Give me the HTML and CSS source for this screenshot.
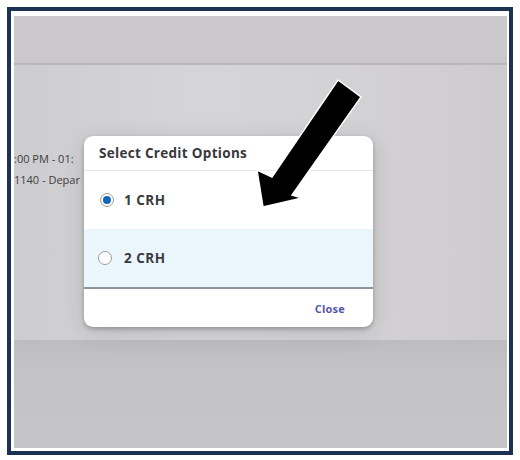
FILE: index.html
```html
<!DOCTYPE html>
<html>
<head>
<meta charset="utf-8">
<link rel="stylesheet" href="styles.css">
</head>
<body>
<div class="frame">
  <div class="screen">
    <div class="topbar"></div>
    <div class="main">
      <div class="line first">:00 PM - 01:</div>
      <div class="line">1140 - Depar</div>
    </div>
    <div class="bottom"></div>

    <div class="modal">
      <div class="modal-head">Select Credit Options</div>
      <div class="option">
        <span class="radio checked"></span>
        <span class="label">1 CRH</span>
      </div>
      <div class="option hover">
        <span class="radio"></span>
        <span class="label">2 CRH</span>
      </div>
      <div class="modal-foot"><span class="close">Close</span></div>
    </div>

    <svg class="arrow" width="520" height="460" viewBox="0 0 520 460">
      <polygon points="338,80 361,97 292,195 302,198 263,207 257,170 272,177" fill="#000" stroke="#fff" stroke-width="1.5" stroke-linejoin="miter"/>
    </svg>
  </div>
</div>
</body>
</html>
```
FILE: styles.css
```css
html, body {
  margin: 0;
  padding: 0;
  background: #ffffff;
}
body {
  width: 520px;
  height: 460px;
  font-family: "Open Sans", "Liberation Sans", sans-serif;
}
.frame {
  margin: 7px 0 0 7px;
  border: 4px solid #1d3152;
  padding: 5px 2px 3px 3px;
  box-sizing: content-box;
  background: #ffffff;
  width: 493px;
  height: 432px;
}
.screen {
  position: relative;
  width: 493px;
  height: 432px;
  background: #cfcdd0;
  overflow: hidden;
  display: flex;
  flex-direction: column;
}
.topbar {
  height: 47px;
  background: #cac8cb;
  border-bottom: 2px solid #b9b7ba;
  flex: none;
}
.main {
  height: 275px;
  flex: none;
  background: linear-gradient(90deg, #cdcccf 0%, #d5d4d6 35%, #d3d2d4 65%, #cdcbce 100%);
  padding-top: 83px;
  box-sizing: border-box;
}
.line {
  font-size: 11px;
  color: #3d3d40;
  line-height: 21px;
  white-space: nowrap;
  margin-left: 0;
}
.bottom {
  flex: 1;
  background: linear-gradient(180deg, #bdbcbf 0%, #c3c2c5 30%, #c5c4c7 100%);
}
.modal {
  position: absolute;
  left: 70px;
  top: 120px;
  width: 289px;
  height: 191px;
  background: #ffffff;
  border-radius: 9px;
  box-shadow: 0 2px 4px rgba(0,0,0,0.25), 0 4px 24px rgba(0,0,0,0.12);
  display: flex;
  flex-direction: column;
  overflow: hidden;
}
.modal-head {
  height: 35px;
  box-sizing: border-box;
  padding: 8px 0 0 15px;
  font-size: 13.5px;
  font-weight: 700;
  color: #38383b;
  border-bottom: 1px solid #e9e9ea;
  letter-spacing: 0.3px;
}
.option {
  height: 58px;
  display: flex;
  align-items: center;
  padding-left: 16px;
  gap: 10px;
}
.option.hover {
  background: #eaf5fc;
  height: 58px;
  border-bottom: 2px solid #8e949c;
  padding-left: 14px;
  gap: 12px;
}
.radio {
  width: 12px;
  height: 12px;
  border-radius: 50%;
  border: 1px solid #9c9ca0;
  background: #ffffff;
  display: flex;
  align-items: center;
  justify-content: center;
}
.radio.checked::after {
  content: "";
  width: 8px;
  height: 8px;
  border-radius: 50%;
  background: #1466b8;
}
.label {
  font-size: 13.5px;
  font-weight: 700;
  color: #3b3b3e;
  letter-spacing: 0.5px;
}
.modal-foot {
  flex: 1;
  display: flex;
  align-items: center;
  justify-content: flex-end;
  padding-right: 28px;
}
.close {
  font-size: 11px;
  font-weight: 700;
  color: #5258a8;
  letter-spacing: 0.2px;
}
.arrow {
  position: absolute;
  left: -14px;
  top: -16px;
}
```
